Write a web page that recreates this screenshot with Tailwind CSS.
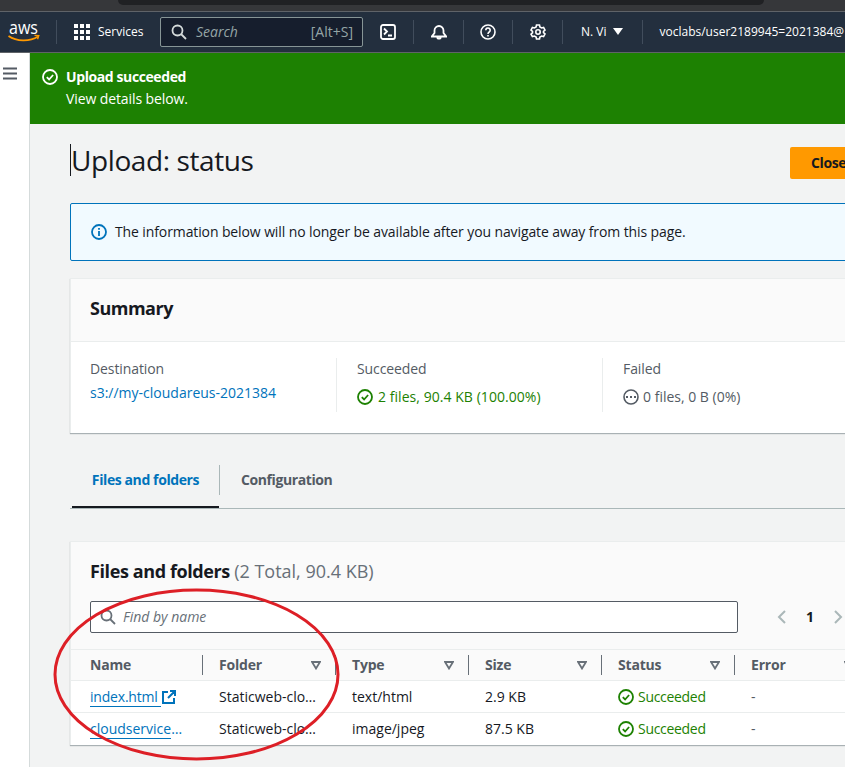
<!DOCTYPE html>
<html>
<head>
<meta charset="utf-8">
<title>Upload: status</title>
<script src="https://cdn.jsdelivr.net/npm/@tailwindcss/browser@4"></script>
</head>
<body class="h-[767px] w-[845px] overflow-hidden bg-[#f2f3f3] font-['Open_Sans',sans-serif] text-sm text-[#16191f]">
<div class="relative h-[767px] w-[845px] overflow-hidden">
  <!--browser strip-->
  <div class="h-[11px] bg-[#36373a] pl-[118px]">
    <div class="h-[5px] w-[646px] rounded-b-lg bg-[#202124]"></div>
  </div>
  <!--top nav-->
  <nav class="flex h-[42px] items-center border-y border-[#5f6368] bg-[#232f3e] text-xs text-white">
    <div class="w-[56px] flex-none pl-2">
      <svg width="33" height="30" viewBox="0 -4 33 30">
        <text x="1" y="13" font-family="Open Sans" font-size="18" textLength="29" lengthAdjust="spacingAndGlyphs" fill="#fff">aws</text>
        <path d="M.5 15c8 5.500 21 6 29.500 .5" fill="none" stroke="#f90" stroke-width="1.800"/>
        <path d="M26.500 14.300l4.300 .2-1.200 3.700" fill="none" stroke="#f90" stroke-width="1.300"/>
      </svg>
    </div>
    <div class="h-6 w-px bg-[#414d5c]"></div>
    <div class="ml-[17px] grid w-4 flex-none grid-cols-3 gap-[2px]">
      <i class="size-1 bg-white"></i><i class="size-1 bg-white"></i><i class="size-1 bg-white"></i>
      <i class="size-1 bg-white"></i><i class="size-1 bg-white"></i><i class="size-1 bg-white"></i>
      <i class="size-1 bg-white"></i><i class="size-1 bg-white"></i><i class="size-1 bg-white"></i>
    </div>
    <span class="ml-2 w-[62px] flex-none">Services</span>
    <div class="flex h-[30px] w-[203px] flex-none items-center rounded-[2px] border border-[#879596] bg-[#161e2d] pr-[9px] pl-[10px]">
      <svg width="16" height="16" viewBox="0 0 16 16" fill="none" stroke="#d5dbdb" stroke-width="1.800"><circle cx="6.500" cy="6.500" r="5"/><path d="M10 10l5 5"/></svg>
      <span class="ml-[9px] flex-1 text-sm text-[#95a5a6] italic">Search</span>
      <span class="text-sm text-[#95a5a6]">[Alt+S]</span>
    </div>
    <div class="flex w-[50px] flex-none justify-center">
      <svg width="16" height="16" viewBox="0 0 16 16" fill="none" stroke="#fff" stroke-width="1.800"><rect x="1" y="1" width="14" height="14" rx="2"/><path d="M4 4.500l3 3-3 3M8 11.500h4"/></svg>
    </div>
    <div class="h-6 w-px bg-[#414d5c]"></div>
    <div class="flex w-[49px] flex-none justify-center">
      <svg width="16" height="16" viewBox="0 0 16 16" fill="none" stroke="#fff" stroke-width="1.800"><path d="M.8 12.500h14.400l-2.700-3.500V6.500a4.500 4.500 0 0 0-9 0V9zM6.300 13a1.700 1.700 0 0 0 3.400 0"/></svg>
    </div>
    <div class="h-6 w-px bg-[#414d5c]"></div>
    <div class="flex w-[48px] flex-none justify-center">
      <svg width="16" height="16" viewBox="0 0 16 16" fill="none" stroke="#fff" stroke-width="1.600"><circle cx="8" cy="8" r="7"/><path d="M5.800 6.200a2.200 2.200 0 1 1 3.400 1.800c-.8.500-1.200 1-1.200 2M8 11v1.500"/></svg>
    </div>
    <div class="h-6 w-px bg-[#414d5c]"></div>
    <div class="flex w-[49px] flex-none justify-center">
      <svg width="16" height="16" viewBox="0 0 16 16" fill="none" stroke="#fff" stroke-width="1.600"><path d="M6.500 1h3l.4 2 1.700 1 2-.6 1.400 2.600-1.500 1.300v1.400l1.500 1.300-1.400 2.600-2-.6-1.700 1-.4 2h-3l-.4-2-1.700-1-2 .6L1 10.100l1.500-1.300V7.300L1 6l1.400-2.600 2 .6 1.700-1z"/><circle cx="8" cy="8" r="2.200"/></svg>
    </div>
    <div class="h-6 w-px bg-[#414d5c]"></div>
    <span class="ml-[18px] flex-none">N. Vi</span>
    <svg class="ml-[6px] flex-none" width="10" height="8" viewBox="0 0 10 8"><path d="M0 0h10L5 7z" fill="#fff"/></svg>
    <div class="ml-[19px] h-6 w-px flex-none bg-[#414d5c]"></div>
    <span class="ml-[17px] flex-none whitespace-nowrap">voclabs/user2189945=2021384@</span>
  </nav>

  <div class="flex h-[714px]">
    <!--side rail-->
    <aside class="w-[30px] flex-none border-r border-[#d5dbdb] bg-white pt-[14px] pl-[3px]">
      <svg width="15" height="13" viewBox="0 0 15 13" fill="none" stroke="#545b64" stroke-width="2"><path d="M0 1.500h14M0 6.500h14M0 11.500h14"/></svg>
    </aside>

    <main class="min-w-0 flex-1">
      <!--flash banner-->
      <div class="flex h-[71px] bg-[#1d8102] pt-[13px] pl-3 text-white">
        <svg class="mt-[3px] flex-none" width="16" height="16" viewBox="0 0 16 16" fill="none" stroke="#fff" stroke-width="1.800"><circle cx="8" cy="8" r="7"/><path d="M4.800 8.200l2.300 2.300 4-4.500"/></svg>
        <div class="ml-2 leading-[22px]">
          <div class="font-bold tracking-[-0.4px]">Upload succeeded</div>
          <div class="tracking-[-0.1px]">View details below.</div>
        </div>
      </div>

      <div class="w-[860px] pl-10">
        <!--page header-->
        <div class="flex h-[79px] items-start justify-between pt-5">
          <h1 class="border-l border-[#16191f] text-[28px] leading-[32px] tracking-[-0.4px] text-[#16191f]">Upload: status</h1>
          <div class="mt-[3px] mr-0 h-8 w-[100px] rounded-[2px] bg-[#ff9900] py-[6px] pl-[21px] leading-5 font-bold tracking-[-0.4px] whitespace-nowrap">Close</div>
        </div>

        <!--info alert-->
        <div class="flex h-[58px] w-[800px] items-center rounded-[2px] border border-[#0073bb] bg-[#f1faff] pl-5">
          <svg width="16" height="16" viewBox="0 0 16 16" fill="none" stroke="#0073bb" stroke-width="1.800"><circle cx="8" cy="8" r="7"/><path d="M8 7v5M8 4v1.800"/></svg>
          <span class="ml-2 tracking-[-0.11px]">The information below will no longer be available after you navigate away from this page.</span>
        </div>

        <!--summary-->
        <section class="mt-[17px] h-[155px] w-[800px] border-t border-l border-[#eaeded] bg-white shadow-[0_1px_1px_0_rgba(0,28,36,0.3)]">
          <div class="flex h-[63px] items-center border-b border-[#eaeded] bg-[#fafafa] pb-1 pl-[19px] text-lg font-bold tracking-[-0.5px]">Summary</div>
          <div class="flex pt-4">
            <div class="h-[54px] w-[266px] border-r border-[#eaeded] pl-[19px] leading-[22px]">
              <div class="tracking-[-0.1px] text-[#545b64]">Destination</div>
              <div class="pt-[2px] text-[#0073bb]">s3://my-cloudareus-2021384</div>
            </div>
            <div class="h-[54px] w-[266px] border-r border-[#eaeded] pl-5 leading-[22px]">
              <div class="tracking-[-0.1px] text-[#545b64]">Succeeded</div>
              <div class="flex items-center pt-[6px] tracking-[0.05px] text-[#1d8102]">
                <svg class="mr-[5px]" width="16" height="16" viewBox="0 0 16 16" fill="none" stroke="#1d8102" stroke-width="1.800"><circle cx="8" cy="8" r="7"/><path d="M4.800 8.200l2.300 2.300 4-4.500"/></svg>
                2 files, 90.4 KB (100.00%)
              </div>
            </div>
            <div class="h-[54px] pl-5 leading-[22px]">
              <div class="tracking-[-0.1px] text-[#545b64]">Failed</div>
              <div class="flex items-center pt-[6px] text-[#545b64]">
                <svg class="mr-[4px]" width="16" height="16" viewBox="0 0 16 16" fill="none" stroke="#545b64" stroke-width="1.600"><circle cx="8" cy="8" r="7"/><path d="M4 7v2M8 7v2M12 7v2" stroke-width="2"/></svg>
                0 files, 0 B (0%)
              </div>
            </div>
          </div>
        </section>

        <!--tabs-->
        <div class="mt-8 flex h-[44px] w-[800px] border-b border-[#aab7b8] font-bold tracking-[-0.4px]">
          <div class="ml-[2px] flex h-[43px] w-[147px] items-start justify-center border-b-2 border-[#16191f] pt-[5px] leading-5 text-[#0073bb]">Files and folders</div>
          <div class="h-[30px] w-px bg-[#aab7b8]"></div>
          <div class="pt-[5px] pl-[21px] leading-5 text-[#545b64]">Configuration</div>
        </div>

        <!--files table-->
        <section class="mt-8 h-[204px] w-[800px] border-t border-l border-[#eaeded] bg-[#fafafa] shadow-[0_1px_1px_0_rgba(0,28,36,0.3)]">
          <div class="pt-[17px] pl-[19px] text-lg leading-[24px] font-bold tracking-[-0.4px]">Files and folders <span class="font-normal tracking-normal text-[#687078]">(2 Total, 90.4 KB)</span></div>
          <div class="mt-[18px] flex h-[32px] items-center pl-[19px]">
            <div class="flex h-[32px] w-[648px] items-center rounded-[2px] border border-[#545b64] bg-white pl-[9px]">
              <svg width="16" height="16" viewBox="0 0 16 16" fill="none" stroke="#687078" stroke-width="1.800"><circle cx="6.500" cy="6.500" r="5"/><path d="M10 10l5 5"/></svg>
              <span class="ml-[7px] text-sm text-[#687078] italic">Find by name</span>
            </div>
            <svg class="ml-[39px]" width="10" height="14" viewBox="0 0 10 14" fill="none" stroke="#aab7b8" stroke-width="2"><path d="M8 1L2 7l6 6"/></svg>
            <span class="ml-[19px] font-bold">1</span>
            <svg class="ml-[19px]" width="10" height="14" viewBox="0 0 10 14" fill="none" stroke="#aab7b8" stroke-width="2"><path d="M2 1l6 6-6 6"/></svg>
          </div>
          <div class="mt-4 grid h-[32px] grid-cols-[132px_133px_133px_133px_133px_133px] items-center border-y border-[#eaeded] font-bold tracking-[-0.2px] text-[#545b64]">
            <div class="flex h-5 items-center border-r border-[#687078] pl-[19px]">Name</div>
            <div class="flex h-5 items-center justify-between border-r border-[#687078] pr-[14px] pl-4">Folder
              <svg width="10" height="9" viewBox="0 0 10 9" fill="none" stroke="#687078" stroke-width="1.800"><path d="M1 1h8L5 7.500z"/></svg></div>
            <div class="flex h-5 items-center justify-between border-r border-[#687078] pr-[14px] pl-4">Type
              <svg width="10" height="9" viewBox="0 0 10 9" fill="none" stroke="#687078" stroke-width="1.800"><path d="M1 1h8L5 7.500z"/></svg></div>
            <div class="flex h-5 items-center justify-between border-r border-[#687078] pr-[14px] pl-4">Size
              <svg width="10" height="9" viewBox="0 0 10 9" fill="none" stroke="#687078" stroke-width="1.800"><path d="M1 1h8L5 7.500z"/></svg></div>
            <div class="flex h-5 items-center justify-between border-r border-[#687078] pr-[14px] pl-4">Status
              <svg width="10" height="9" viewBox="0 0 10 9" fill="none" stroke="#687078" stroke-width="1.800"><path d="M1 1h8L5 7.500z"/></svg></div>
            <div class="flex h-5 items-center justify-between pr-[14px] pl-4">Error
              <svg width="10" height="9" viewBox="0 0 10 9" fill="none" stroke="#687078" stroke-width="1.800"><path d="M1 1h8L5 7.500z"/></svg></div>
          </div>
          <div class="grid h-[32px] grid-cols-[132px_133px_133px_133px_133px_133px] items-center border-b border-[#eaeded] bg-white pt-px">
            <div class="flex items-center pl-[19px] text-[#0073bb]"><span class="border-b border-[#0073bb] leading-[18px] tracking-[-0.2px]">index.html&nbsp;</span>
              <svg class="ml-px" width="14" height="14" viewBox="0 0 14 14" fill="none" stroke="#0073bb" stroke-width="2"><path d="M6 2H1v11h11V8M8 1h5v5M13 1L6 8"/></svg></div>
            <div class="pl-4">Staticweb-clo…</div>
            <div class="pl-4">text/html</div>
            <div class="pl-4">2.9 KB</div>
            <div class="flex items-center pl-4 tracking-[-0.3px] text-[#1d8102]">
              <svg class="mr-1" width="16" height="16" viewBox="0 0 16 16" fill="none" stroke="#1d8102" stroke-width="1.800"><circle cx="8" cy="8" r="7"/><path d="M4.800 8.200l2.300 2.300 4-4.500"/></svg>Succeeded</div>
            <div class="pl-4 text-[#545b64]">-</div>
          </div>
          <div class="grid h-[32px] grid-cols-[132px_133px_133px_133px_133px_133px] items-center bg-white">
            <div class="pl-[19px] text-[#0073bb]"><span class="border-b border-[#0073bb] leading-[18px]">cloudservice</span>…</div>
            <div class="pl-4">Staticweb-clo…</div>
            <div class="pl-4">image/jpeg</div>
            <div class="pl-4">87.5 KB</div>
            <div class="flex items-center pl-4 tracking-[-0.3px] text-[#1d8102]">
              <svg class="mr-1" width="16" height="16" viewBox="0 0 16 16" fill="none" stroke="#1d8102" stroke-width="1.800"><circle cx="8" cy="8" r="7"/><path d="M4.800 8.200l2.300 2.300 4-4.500"/></svg>Succeeded</div>
            <div class="pl-4 text-[#545b64]">-</div>
          </div>
        </section>
      </div>
    </main>
  </div>

  <!--red annotation drawn over the screenshot-->
  <svg class="pointer-events-none absolute top-0 left-0" width="845" height="767" viewBox="0 0 845 767" fill="none">
    <ellipse cx="196.500" cy="674.500" rx="141.500" ry="84.500" stroke="#dd1f26" stroke-width="3"/>
  </svg>
</div>
</body>
</html>
